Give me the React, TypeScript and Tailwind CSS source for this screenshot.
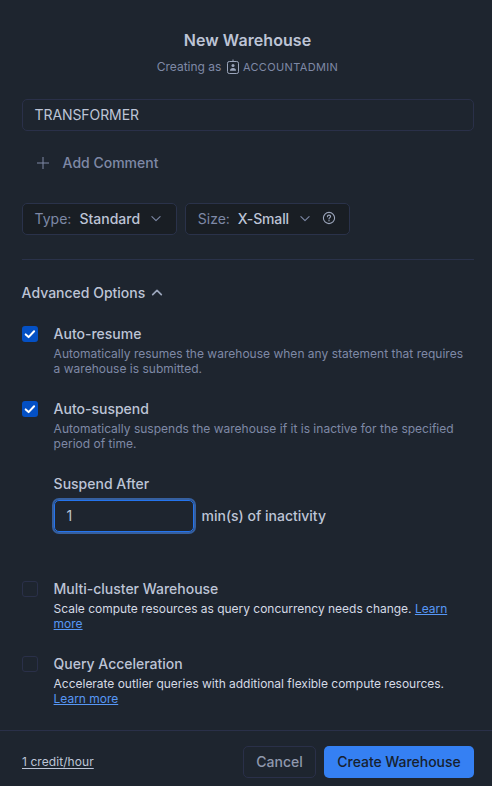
import React from "react";

function Chevron({ up = false, className = "" }: { up?: boolean; className?: string }) {
  return (
    <svg width="12" height="12" viewBox="0 0 12 12" fill="none" stroke="currentColor" className={className} strokeLinecap="round" strokeLinejoin="round">
      {up ? <path d="M1.7 7.6L6 3.3L10.3 7.6" strokeWidth="1.7" /> : <path d="M1.9 3.7L6 7.7L10.1 3.7" strokeWidth="1.1" />}
    </svg>
  );
}

function RoleIcon() {
  return (
    <svg width="14" height="16" viewBox="0 0 14 16" fill="none" stroke="currentColor">
      <rect x="1.5" y="2.5" width="11" height="12" rx="1.8" />
      <path d="M7 0.5V3" />
      <circle cx="7" cy="6.5" r="1.5" fill="currentColor" stroke="none" />
      <path d="M4 11.7C4 9.8 5.2 9 7 9S10 9.8 10 11.7Z" fill="currentColor" stroke="none" />
    </svg>
  );
}

function HelpIcon() {
  return (
    <svg width="14" height="14" viewBox="0 0 14 14" fill="none" stroke="currentColor" strokeWidth="1.1" className="-mt-0.5 text-[#9ba5bb]">
      <circle cx="7" cy="7" r="5.6" />
      <path d="M5.4 5.7C5.4 4.7 6.1 4.1 7 4.1S8.6 4.7 8.6 5.5C8.6 6.6 7 6.7 7 7.9" strokeLinecap="round" />
      <circle cx="7" cy="9.7" r=".7" fill="currentColor" stroke="none" />
    </svg>
  );
}

function Checkbox({ checked = false }: { checked?: boolean }) {
  return checked ? (
    <div className="mt-0.5 h-4 w-4 shrink-0 rounded-[3px] bg-[#0450c4]">
      <svg width="16" height="16" viewBox="0 0 16 16" fill="none" stroke="white" strokeWidth="2" strokeLinecap="round" strokeLinejoin="round">
        <path d="M3.7 8.4L6.6 11.1L12.1 5.2" />
      </svg>
    </div>
  ) : (
    <div className="mt-0.5 h-4 w-4 shrink-0 rounded-[3px] border border-[#2a3049]" />
  );
}

function Option({ title, checked, bright, children }: { title: string; checked?: boolean; bright?: boolean; children: React.ReactNode }) {
  return (
    <div className="flex h-[75px] gap-[15.6px]">
      <Checkbox checked={checked} />
      <div>
        <div className="text-sm leading-5 font-medium tracking-[-0.01px] text-[#bdc4d6]">{title}</div>
        <p className={`mt-[2px] w-[420px] text-[12px] leading-[15px] ${bright ? "tracking-[-0.02px] text-[#d5dae5]" : "tracking-[0.01px] text-[#7e89a6]"}`}>{children}</p>
      </div>
    </div>
  );
}

export default function App() {
  return (
    <div className="flex h-[786px] w-[492px] flex-col overflow-hidden bg-[#1e252f] font-['Inter','Liberation_Sans',sans-serif] text-[#bdc4d6]">
      <header className="flex flex-col items-center pt-7 pr-[18px] pl-[21px]">
        <h1 className="text-base leading-6 font-semibold tracking-[0.08px]">New Warehouse</h1>
        <div className="mt-[7px] flex h-4 items-center text-[12px] leading-4 text-[#7e89a6]">
          <span>Creating as</span>
          <span className="mr-[3px] ml-[4.5px] text-[#9ba5bb]"><RoleIcon /></span>
          <span className="text-[11px] tracking-[0.36px]">ACCOUNTADMIN</span>
        </div>
      </header>

      <main className="flex flex-col pr-[18px] pl-[22px]">
        <div className="mt-6 flex h-8 items-center rounded-[5px] border border-[#2a3049] px-[11.5px] text-sm tracking-[-0.08px]">TRANSFORMER</div>
        <button className="mt-[22px] flex h-5 items-center pl-[15px] text-sm font-medium text-[#7e89a6]">
          <svg width="12" height="12" viewBox="0 0 12 12" stroke="currentColor" className="-mt-px mr-[13.6px]"><path d="M6 0V12M0 6H12" /></svg>
          Add Comment
        </button>

        <div className="mt-[30px] flex gap-2">
          <button className="flex h-8 w-[155px] items-center rounded-[5px] border border-[#2a324a] bg-[#191e24] pl-[11.6px] text-sm">
            <span className="text-[#7e89a6]">Type:</span>
            <span className="ml-2 font-medium">Standard</span>
            <Chevron className="ml-[10px] text-[#7e89a6]" />
          </button>
          <button className="flex h-8 w-[165px] items-center rounded-[5px] border border-[#2a324a] bg-[#191e24] pl-[11.8px] text-sm">
            <span className="text-[#7e89a6]">Size:</span>
            <span className="ml-[7.8px] font-medium tracking-[-0.15px]">X-Small</span>
            <Chevron className="mr-[11px] ml-[10px] text-[#7e89a6]" />
            <HelpIcon />
          </button>
        </div>

        <div className="mt-6 h-px bg-[#2a324a]" />

        <button className="-ml-[0.4px] mt-[23px] flex h-5 items-center text-sm font-medium">
          Advanced Options
          <Chevron up className="ml-[5.5px] text-[#9ba5bb]" />
        </button>

        <section className="mt-[21px]">
          <Option title="Auto-resume" checked>Automatically resumes the warehouse when any statement that requires<br />a warehouse is submitted.</Option>
          <Option title="Auto-suspend" checked>Automatically suspends the warehouse if it is inactive for the specified<br />period of time.</Option>
          <div className="h-[105px] pl-8">
            <div className="-ml-[0.4px] text-sm leading-5 font-medium">Suspend After</div>
            <div className="mt-[6px] flex items-center text-sm">
              <div className="flex h-8 w-[140px] items-center rounded-[5px] border border-[#2474ee] pl-[11.6px] ring-2 ring-[#355f9f]">1</div>
              <span className="ml-[7.5px] font-medium">min(s) of inactivity</span>
            </div>
          </div>
          <Option title="Multi-cluster Warehouse" bright>Scale compute resources as query concurrency needs change. <a className="text-[#5797f5] underline">Learn<br />more</a></Option>
          <Option title="Query Acceleration" bright>Accelerate outlier queries with additional flexible compute resources.<br /><a className="text-[#5797f5] underline">Learn more</a></Option>
        </section>
      </main>

      <footer className="mt-[1px] flex h-14 items-center border-t border-[#2a3049] pt-[7px] pr-[18px] pl-[22px]">
        <span className="text-[12px] tracking-[0.07px] underline underline-offset-2">1 credit/hour</span>
        <button className="ml-auto h-8 w-[73px] rounded-[5px] border border-[#2a3049] text-sm font-medium text-[#8f98ad]">Cancel</button>
        <button className="ml-2 h-8 w-[150px] rounded-[5px] bg-[#3580f3] text-sm font-medium tracking-[-0.04px] text-[#17202e]">Create Warehouse</button>
      </footer>
    </div>
  );
}
